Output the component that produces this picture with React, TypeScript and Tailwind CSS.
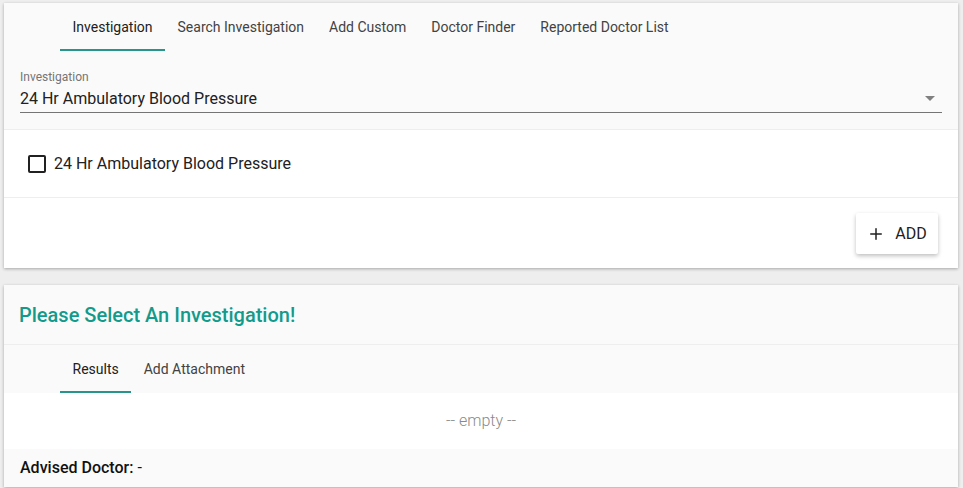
import { Plus } from 'lucide-react';

const mainTabs = ['Investigation', 'Search Investigation', 'Add Custom', 'Doctor Finder', 'Reported Doctor List'];
const resultTabs = ['Results', 'Add Attachment'];

const Tabs = ({ items, active }: { items: string[]; active: number }) => (
  <div className="flex h-[48px] pl-[56px] bg-[#fafafa]">
    {items.map((t, i) => (
      <div
        key={t}
        className={`relative flex items-center px-[12.5px] text-[14px] ${i === active ? 'text-[#212121]' : 'text-[#424242]'}`}
      >
        {t}
        {i === active && <div className="absolute left-0 right-0 bottom-0 h-[2px] bg-[#26968c]" />}
      </div>
    ))}
  </div>
);

const App = () => {
  return (
    <div className="min-h-screen bg-[#eeeeee] pt-[3px] pl-[4px] pr-[5px]" style={{ fontFamily: 'Roboto, "Noto Sans", sans-serif' }}>
      {/* Investigation card */}
      <div className="bg-white shadow-[0_1px_3px_rgba(0,0,0,0.3)]">
        <Tabs items={mainTabs} active={0} />
        <div className="bg-[#fafafa] pt-[18px] pb-[16px] px-[16px] border-b border-[#eeeeee]">
          <div className="text-[12px] leading-[16px] text-[#757575]">Investigation</div>
          <div className="flex items-center justify-between h-[28px] border-b border-[#757575]">
            <span className="text-[16px] leading-[24px] text-[#212121]">24 Hr Ambulatory Blood Pressure</span>
            <svg width="10" height="5" viewBox="0 0 10 5" className="mr-[7px]">
              <path d="M0 0 L10 0 L5 5 Z" fill="#808080" />
            </svg>
          </div>
        </div>
        <div className="flex items-center h-[68px] pl-[24px] border-b border-[#eeeeee]">
          <div className="w-[18px] h-[18px] border-2 border-[#212121] rounded-[2px]" />
          <span className="ml-[8px] text-[16px] text-[#212121]">24 Hr Ambulatory Blood Pressure</span>
        </div>
        <div className="flex justify-end items-start h-[70px] pt-[15px] pr-[20px]">
          <button className="flex items-center gap-[10px] h-[41px] w-[82px] justify-center bg-white rounded-[2px] shadow-[0_2px_4px_rgba(0,0,0,0.25)] text-[16px] text-[#212121]">
            <Plus size={18} strokeWidth={2} />
            ADD
          </button>
        </div>
      </div>

      {/* Results card */}
      <div className="mt-[17px] bg-white shadow-[0_1px_3px_rgba(0,0,0,0.3)]">
        <div className="flex items-center h-[60px] pl-[15px] bg-[#fafafa] border-b border-[#eeeeee]">
          <span className="text-[20px] font-medium text-[#139a8a]">Please Select An Investigation!</span>
        </div>
        <Tabs items={resultTabs} active={0} />
        <div className="flex items-center justify-center h-[56px] text-[16px] font-light text-[#8a8a8a]">-- empty --</div>
        <div className="flex items-center h-[38px] pl-[16px] bg-[#fafafa] text-[16px] text-[#111]">
          <span className="font-medium">Advised Doctor:</span>
          <span className="ml-[4px]">-</span>
        </div>
      </div>
    </div>
  );
};

export default App;
